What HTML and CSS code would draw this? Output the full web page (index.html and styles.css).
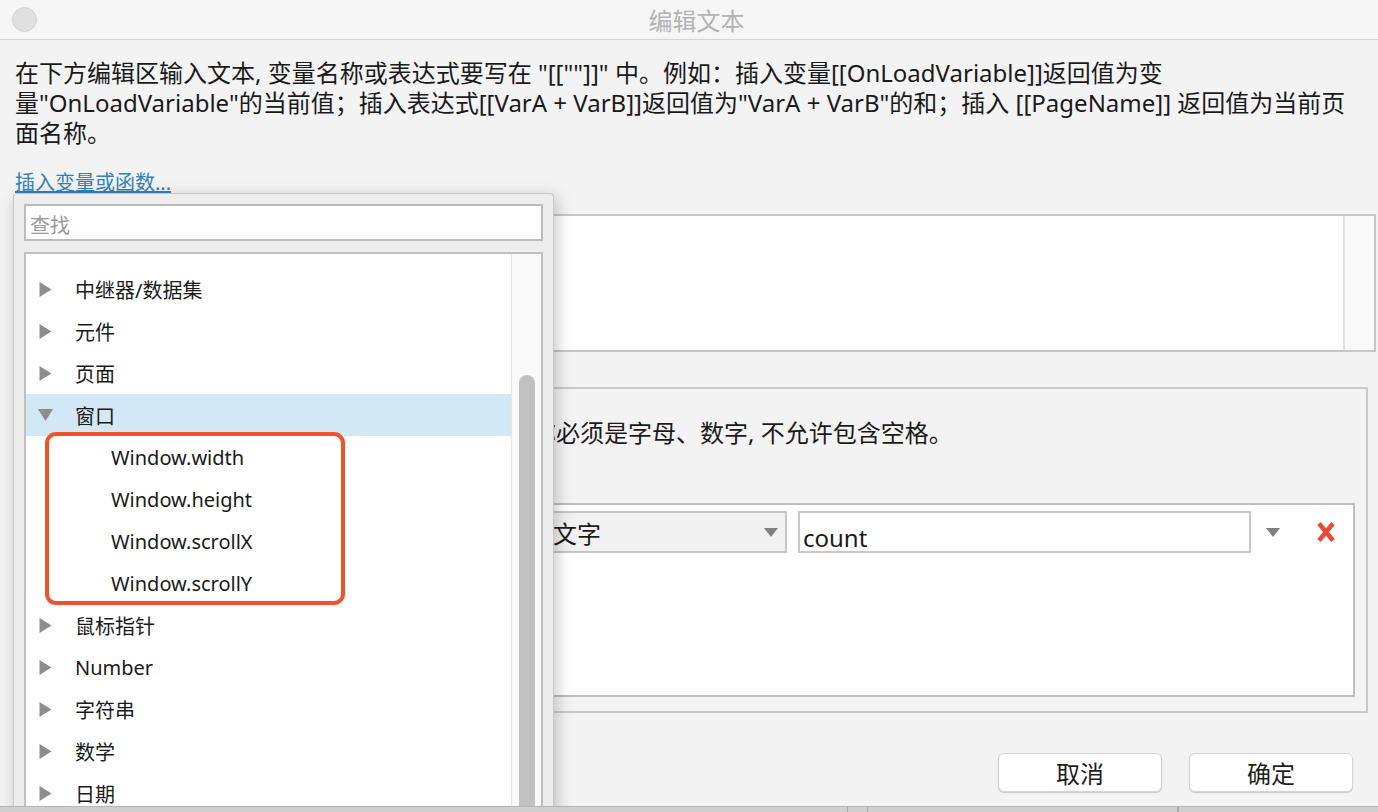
FILE: index.html
```html
<!DOCTYPE html>
<html lang="zh-CN">
<head>
    <meta charset="UTF-8">
    <title>编辑文本</title>
    <link rel="stylesheet" href="styles.css">
</head>
<body>
    <div class="window">
        <header class="titlebar">
            <span class="close-dot"></span>
            <h1 class="title">编辑文本</h1>
        </header>

        <main class="dialog">
            <p class="intro">在下方编辑区输入文本, 变量名称或表达式要写在 "[[""]]" 中。例如：插入变量[[OnLoadVariable]]返回值为变<br>量"OnLoadVariable"的当前值；插入表达式[[VarA + VarB]]返回值为"VarA + VarB"的和；插入 [[PageName]] 返回值为当前页<br>面名称。</p>
            <a class="insert-link" href="#">插入变量或函数...</a>

            <div class="editor">
                <div class="editor-text"></div>
                <div class="editor-scroll"></div>
            </div>

            <section class="locals">
                <p class="locals-hint">称必须是字母、数字, 不允许包含空格。</p>
                <div class="var-table">
                    <div class="var-row">
                        <div class="var-name"></div>
                        <div class="var-type">
                            <span>文字</span>
                            <svg class="caret" width="14" height="9" viewBox="0 0 14 9"><polygon points="0,0 14,0 7,9" /></svg>
                        </div>
                        <div class="var-value">count</div>
                        <svg class="caret value-caret" width="14" height="9" viewBox="0 0 14 9"><polygon points="0,0 14,0 7,9" /></svg>
                        <svg class="remove" width="20" height="22" viewBox="0 0 20 22">
                            <path d="M3 2.5 L17 19.5 M17 2.5 L3 19.5" />
                        </svg>
                    </div>
                </div>
            </section>

            <div class="actions">
                <button class="btn">取消</button>
                <button class="btn">确定</button>
            </div>
        </main>

        <!-- popup for picking a variable or function -->
        <div class="picker">
            <div class="picker-search">查找</div>
            <div class="picker-tree">
                <ul class="tree-list">
                    <li class="tree-row"><svg class="arrow" width="12" height="15" viewBox="0 0 12 15"><polygon points="0,0 12,7.5 0,15" /></svg>中继器/数据集</li>
                    <li class="tree-row"><svg class="arrow" width="12" height="15" viewBox="0 0 12 15"><polygon points="0,0 12,7.5 0,15" /></svg>元件</li>
                    <li class="tree-row"><svg class="arrow" width="12" height="15" viewBox="0 0 12 15"><polygon points="0,0 12,7.5 0,15" /></svg>页面</li>
                    <li class="tree-row selected"><svg class="arrow" width="15" height="12" viewBox="0 0 15 12"><polygon points="0,0 15,0 7.5,12" /></svg>窗口</li>
                    <li class="tree-row child">Window.width</li>
                    <li class="tree-row child">Window.height</li>
                    <li class="tree-row child">Window.scrollX</li>
                    <li class="tree-row child">Window.scrollY</li>
                    <li class="tree-row"><svg class="arrow" width="12" height="15" viewBox="0 0 12 15"><polygon points="0,0 12,7.5 0,15" /></svg>鼠标指针</li>
                    <li class="tree-row"><svg class="arrow" width="12" height="15" viewBox="0 0 12 15"><polygon points="0,0 12,7.5 0,15" /></svg>Number</li>
                    <li class="tree-row"><svg class="arrow" width="12" height="15" viewBox="0 0 12 15"><polygon points="0,0 12,7.5 0,15" /></svg>字符串</li>
                    <li class="tree-row"><svg class="arrow" width="12" height="15" viewBox="0 0 12 15"><polygon points="0,0 12,7.5 0,15" /></svg>数学</li>
                    <li class="tree-row"><svg class="arrow" width="12" height="15" viewBox="0 0 12 15"><polygon points="0,0 12,7.5 0,15" /></svg>日期</li>
                </ul>
                <div class="tree-scroll"><div class="tree-thumb"></div></div>
                <div class="highlight"></div>
            </div>
        </div>
    </div>

    <!-- edge of the window behind the dialog -->
    <div class="behind">
        <span class="behind-cell wide"></span>
        <span class="behind-cell narrow"></span>
        <span class="behind-cell mid"></span>
        <span class="behind-cell"></span>
    </div>
</body>
</html>
```

FILE: styles.css
```css
body {
    margin: 0;
    width: 1378px;
    height: 812px;
    overflow: hidden;
    font-family: "Noto Sans", "Noto Sans CJK SC", sans-serif;
    color: #1a1a1a;
    background-color: #cdcdcd;
}

.window {
    position: relative;
    height: 806px;
    overflow: hidden;
    background-color: #f3f3f3;
}

/* title bar */
.titlebar {
    display: flex;
    align-items: center;
    height: 39px;
    background-color: #f6f6f6;
    border-bottom: 1px solid #d3d3d3;
}

.close-dot {
    width: 23px;
    height: 23px;
    margin-left: 12px;
    border-radius: 50%;
    background-color: #e0e0e0;
    border: 1px solid #d2d2d2;
}

.title {
    flex: 1;
    margin: 0;
    padding-right: 22px;
    text-align: center;
    font-size: 24px;
    font-weight: 400;
    color: #b3b3b3;
}

/* dialog body */
.dialog {
    padding: 18px 0 0 15px;
}

.intro {
    margin: 0;
    font-size: 24px;
    line-height: 30px;
    white-space: nowrap;
}

.insert-link {
    display: block;
    width: fit-content;
    margin-top: 20px;
    font-size: 20px;
    line-height: 30px;
    color: #3282b5;
    text-decoration: underline;
}

.editor {
    display: flex;
    height: 138px;
    margin-top: 16px;
    margin-right: 2px;
    box-sizing: border-box;
    border: 2px solid #c7c7c7;
    background-color: #fff;
}

.editor-text {
    flex: 1;
}

.editor-scroll {
    width: 29px;
    background-color: #f9f9f9;
    border-left: 2px solid #e2e2e2;
}

.locals {
    height: 326px;
    margin-top: 35px;
    margin-right: 10px;
    padding: 29px 11px 14px 14px;
    box-sizing: border-box;
    border: 2px solid #c9c9c9;
}

/* the start of this hint sits under the picker */
.locals-hint {
    margin: 0 0 55px;
    padding-left: 501px;
    font-size: 24px;
    line-height: 30px;
    white-space: nowrap;
}

.var-table {
    height: 194px;
    padding: 6px 17px 0 8px;
    box-sizing: border-box;
    border: 2px solid #bdbdbd;
    background-color: #fff;
}

.var-row {
    display: flex;
    align-items: center;
    height: 42px;
}

.var-name,
.var-type,
.var-value {
    height: 42px;
    box-sizing: border-box;
    font-size: 24px;
    display: flex;
    align-items: center;
}

.var-name {
    flex: 1;
    border: 2px solid #c8c8c8;
}

.var-type {
    width: 241px;
    margin-left: 11px;
    padding: 0 7px 0 5px;
    justify-content: space-between;
    border: 2px solid #c5c5c5;
    background-color: #f1f1f1;
}

.var-value {
    width: 453px;
    margin-left: 11px;
    padding: 10px 0 0 3px;
    border: 2px solid #c8c8c8;
    background-color: #fff;
}

.caret {
    fill: #808080;
}

.value-caret {
    margin-left: 15px;
}

.remove {
    margin-left: 36px;
    fill: none;
    stroke: #e84a36;
    stroke-width: 4.5;
}

.actions {
    display: flex;
    justify-content: flex-end;
    gap: 27px;
    margin-top: 40px;
    margin-right: 25px;
}

.btn {
    width: 164px;
    height: 39px;
    padding: 0;
    font-family: inherit;
    font-size: 24px;
    color: #1e1e1e;
    background-color: #fff;
    border: 1px solid #d4d4d4;
    border-radius: 6px;
    box-shadow: 0 1px 1px rgba(0, 0, 0, 0.18);
}

/* variable picker popup */
.picker {
    position: absolute;
    left: 13px;
    top: 193px;
    width: 541px;
    height: 640px;
    padding: 10px;
    box-sizing: border-box;
    background-color: #ededed;
    border: 1px solid #c6c6c6;
    border-radius: 4px;
    box-shadow: 3px 4px 16px rgba(0, 0, 0, 0.22);
    display: flex;
    flex-direction: column;
}

.picker-search {
    height: 37px;
    padding: 3px 0 0 4px;
    box-sizing: border-box;
    border: 2px solid #bcbcbc;
    background-color: #fff;
    font-size: 20px;
    line-height: 33px;
    color: #9b9b9b;
}

.picker-tree {
    position: relative;
    flex: 1;
    display: flex;
    margin-top: 11px;
    border: 2px solid #c0c0c0;
    background-color: #fff;
}

.tree-list {
    flex: 1;
    margin: 0;
    padding: 14px 0 0;
    list-style: none;
}

.tree-row {
    display: flex;
    align-items: center;
    height: 42px;
    padding-left: 12px;
    font-size: 20px;
}

.tree-row .arrow {
    width: 15px;
    margin-right: 22px;
    fill: #8d8d8d;
}

.tree-row.selected {
    background-color: #d3e8f5;
}

.tree-row.child {
    padding-left: 85px;
}

.tree-scroll {
    width: 29px;
    display: flex;
    justify-content: center;
    background-color: #f9f9f9;
    border-left: 1px solid #e6e6e6;
}

.tree-thumb {
    width: 16px;
    height: 600px;
    margin-top: 121px;
    border-radius: 8px;
    background-color: #c1c1c1;
}

.highlight {
    position: absolute;
    left: 19px;
    top: 178px;
    width: 300px;
    height: 173px;
    box-sizing: border-box;
    border: 4px solid #f05328;
    border-radius: 11px;
}

/* strip of the window underneath */
.behind {
    display: flex;
    height: 6px;
    border-top: 1px solid #b5b5b5;
    background-color: #cfcfcf;
}

.behind-cell {
    border-right: 1px solid #a9a9a9;
}

.behind-cell.wide {
    width: 847px;
}

.behind-cell.narrow {
    width: 19px;
}

.behind-cell.mid {
    width: 309px;
}
```
